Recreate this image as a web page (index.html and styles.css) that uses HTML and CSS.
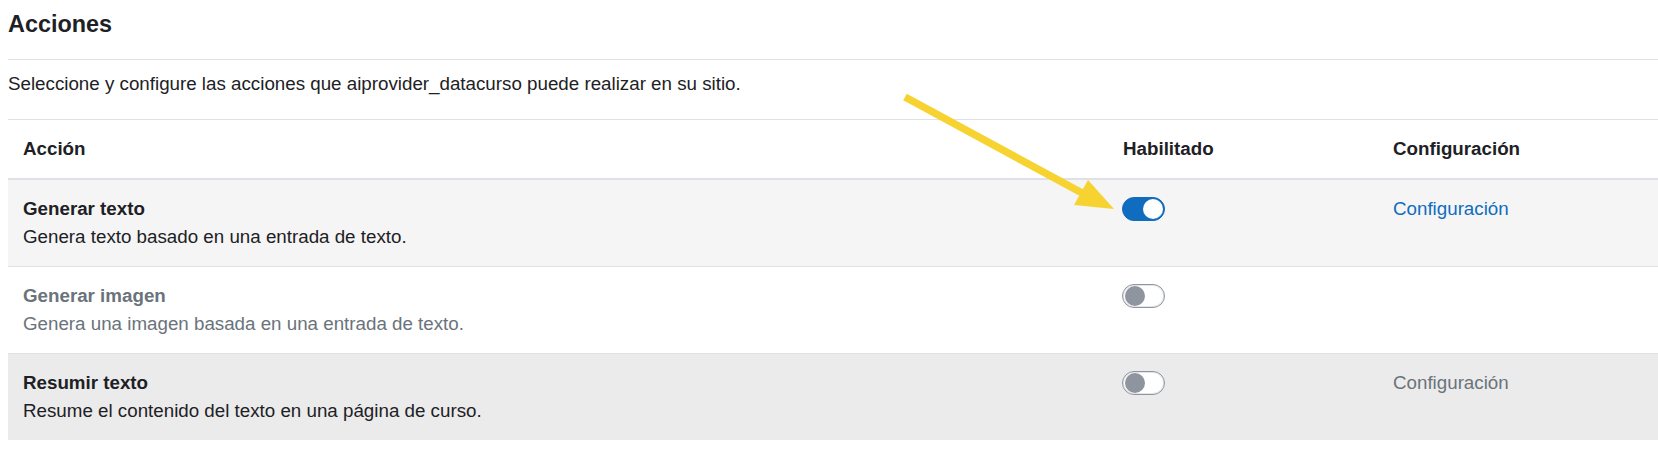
FILE: index.html
```html
<!DOCTYPE html>
<html lang="es">
<head>
<meta charset="utf-8">
<title>Acciones</title>
<link rel="stylesheet" href="styles.css">
</head>
<body>
<div class="page">
  <h3 class="title">Acciones</h3>
  <div class="sep"></div>
  <p class="desc">Seleccione y configure las acciones que aiprovider_datacurso puede realizar en su sitio.</p>
  <table class="actions">
    <colgroup>
      <col class="col-action">
      <col class="col-enabled">
      <col class="col-config">
    </colgroup>
    <thead>
      <tr><th>Acción</th><th>Habilitado</th><th>Configuración</th></tr>
    </thead>
    <tbody>
      <tr class="striped">
        <td><div class="name">Generar texto</div><div>Genera texto basado en una entrada de texto.</div></td>
        <td><span class="switch on"><span class="knob"></span></span></td>
        <td><a class="cfg" href="#">Configuración</a></td>
      </tr>
      <tr class="disabled">
        <td><div class="name">Generar imagen</div><div>Genera una imagen basada en una entrada de texto.</div></td>
        <td><span class="switch"><span class="knob"></span></span></td>
        <td></td>
      </tr>
      <tr class="hovered">
        <td><div class="name">Resumir texto</div><div>Resume el contenido del texto en una página de curso.</div></td>
        <td><span class="switch"><span class="knob"></span></span></td>
        <td><span class="cfg muted">Configuración</span></td>
      </tr>
    </tbody>
  </table>
  <svg class="arrow" width="1658" height="465" viewBox="0 0 1658 465" aria-hidden="true">
    <line x1="905" y1="87" x2="1084" y2="184" stroke="#f6d330" stroke-width="7.5"/>
    <polygon points="1088,170 1114,199 1074,195" fill="#f6d330"/>
  </svg>
</div>
</body>
</html>
```

FILE: styles.css
```css
html, body {
  margin: 0;
  padding: 0;
  background: #ffffff;
}

.page {
  position: relative;
  padding-left: 8px;
  font-family: "Liberation Sans", Arial, sans-serif;
  font-size: 18.75px;
  line-height: 28px;
  color: #1d2125;
}

.title {
  margin: 9.5px 0 0;
  font-size: 23.4px;
  line-height: 28px;
  font-weight: 700;
}

.sep {
  margin-top: 21.5px;
  border-top: 1px solid #dee2e6;
}

.desc {
  margin: 10px 0 21px;
}

.actions {
  width: 1650px;
  border-collapse: separate;
  border-spacing: 0;
}

.col-action { width: 1100px; }
.col-enabled { width: 270px; }
.col-config { width: 280px; }

.actions th {
  text-align: left;
  font-weight: 700;
  padding: 15px;
  border-top: 1px solid #dee2e6;
  border-bottom: 2px solid #dee2e6;
  vertical-align: top;
}

.actions td {
  padding: 15px;
  vertical-align: top;
}

.actions tbody tr + tr td {
  border-top: 1px solid #dee2e6;
}

.striped td { background: #f5f5f5; }
.hovered td { background: #ebebeb; }

.disabled td { color: #6a737b; }

.name { font-weight: 700; }

.cfg {
  color: #0f6cbf;
  text-decoration: none;
}

.cfg.muted { color: #6a737b; }

.switch {
  position: relative;
  display: block;
  box-sizing: border-box;
  width: 43px;
  height: 24px;
  margin: 2px 0 0 -1px;
  border: 1px solid #8f959e;
  border-radius: 12px;
  background: #ffffff;
  box-shadow: inset 0 0 0 1px #e3e5e8;
}

.switch .knob {
  position: absolute;
  top: 1px;
  left: 2px;
  width: 20px;
  height: 20px;
  border-radius: 50%;
  background: #8f959e;
}

.switch.on {
  border-color: #0f6cbf;
  background: #0f6cbf;
  box-shadow: none;
}

.switch.on .knob {
  top: 1px;
  left: auto;
  right: 1px;
  width: 20px;
  height: 20px;
  background: #ffffff;
}

.arrow {
  position: absolute;
  top: 0;
  left: 0;
  pointer-events: none;
}
```
